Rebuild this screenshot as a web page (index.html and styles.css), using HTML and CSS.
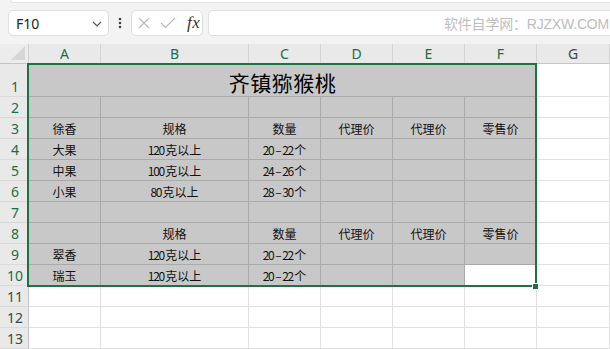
FILE: index.html
```html
<!DOCTYPE html>
<html lang="zh-CN">
<head>
<meta charset="utf-8">
<title>齐镇猕猴桃</title>
<link rel="stylesheet" href="styles.css">
</head>
<body>
<div class="toolbar">
  <div class="edge"></div>
  <div class="formula-row">
    <div class="namebox">
      <span class="ref">F10</span>
      <svg class="chev" width="10" height="6" viewBox="0 0 10 6"><polyline points="1,1 5,5 9,1" fill="none" stroke="#555" stroke-width="1.2"/></svg>
    </div>
    <div class="dots">
      <svg width="4" height="12" viewBox="0 0 4 12"><circle cx="2" cy="2" r="1.3" fill="#444"/><circle cx="2" cy="6" r="1.3" fill="#444"/><circle cx="2" cy="10" r="1.3" fill="#444"/></svg>
    </div>
    <div class="fxbox">
      <svg class="ico" width="12" height="12" viewBox="0 0 12 12"><path d="M1 1 L11 11 M11 1 L1 11" stroke="#b8b8b8" stroke-width="1.1" fill="none"/></svg>
      <svg class="ico" width="16" height="12" viewBox="0 0 16 12"><polyline points="1,6 5.5,10.5 15,1" stroke="#b8b8b8" stroke-width="1.1" fill="none"/></svg>
      <span class="fx">fx</span>
    </div>
    <div class="input"><span class="wm">软件自学网：RJZXW.COM</span></div>
  </div>
</div>

<div class="sheet">
  <div class="h corner"><svg width="14" height="14" viewBox="0 0 14 14"><polygon points="14,0 14,14 0,14" fill="#d6d6d6"/></svg></div>
  <div class="h col sel-h">A</div>
  <div class="h col sel-h">B</div>
  <div class="h col sel-h">C</div>
  <div class="h col sel-h">D</div>
  <div class="h col sel-h">E</div>
  <div class="h col sel-h">F</div>
  <div class="h col">G</div>

  <div class="h row sel-h">1</div>
  <div class="c g title">齐镇猕猴桃</div>
  <div class="c"></div>

  <div class="h row sel-h">2</div>
  <div class="c g"></div><div class="c g"></div><div class="c g"></div><div class="c g"></div><div class="c g"></div><div class="c g"></div>
  <div class="c"></div>

  <div class="h row sel-h">3</div>
  <div class="c g">徐香</div><div class="c g">规格</div><div class="c g">数量</div><div class="c g">代理价</div><div class="c g">代理价</div><div class="c g">零售价</div>
  <div class="c"></div>

  <div class="h row sel-h">4</div>
  <div class="c g">大果</div><div class="c g"><span class="n">120</span>克以上</div><div class="c g"><span class="n">20</span><span class="d">–</span><span class="n">22</span>个</div><div class="c g"></div><div class="c g"></div><div class="c g"></div>
  <div class="c"></div>

  <div class="h row sel-h">5</div>
  <div class="c g">中果</div><div class="c g"><span class="n">100</span>克以上</div><div class="c g"><span class="n">24</span><span class="d">–</span><span class="n">26</span>个</div><div class="c g"></div><div class="c g"></div><div class="c g"></div>
  <div class="c"></div>

  <div class="h row sel-h">6</div>
  <div class="c g">小果</div><div class="c g"><span class="n">80</span>克以上</div><div class="c g"><span class="n">28</span><span class="d">–</span><span class="n">30</span>个</div><div class="c g"></div><div class="c g"></div><div class="c g"></div>
  <div class="c"></div>

  <div class="h row sel-h">7</div>
  <div class="c g"></div><div class="c g"></div><div class="c g"></div><div class="c g"></div><div class="c g"></div><div class="c g"></div>
  <div class="c"></div>

  <div class="h row sel-h">8</div>
  <div class="c g"></div><div class="c g">规格</div><div class="c g">数量</div><div class="c g">代理价</div><div class="c g">代理价</div><div class="c g">零售价</div>
  <div class="c"></div>

  <div class="h row sel-h">9</div>
  <div class="c g">翠香</div><div class="c g"><span class="n">120</span>克以上</div><div class="c g"><span class="n">20</span><span class="d">–</span><span class="n">22</span>个</div><div class="c g"></div><div class="c g"></div><div class="c g"></div>
  <div class="c"></div>

  <div class="h row sel-h">10</div>
  <div class="c g">瑞玉</div><div class="c g"><span class="n">120</span>克以上</div><div class="c g"><span class="n">20</span><span class="d">–</span><span class="n">22</span>个</div><div class="c g"></div><div class="c g"></div><div class="c"></div>
  <div class="c"></div>

  <div class="h row">11</div>
  <div class="c"></div><div class="c"></div><div class="c"></div><div class="c"></div><div class="c"></div><div class="c"></div><div class="c"></div>

  <div class="h row">12</div>
  <div class="c"></div><div class="c"></div><div class="c"></div><div class="c"></div><div class="c"></div><div class="c"></div><div class="c"></div>

  <div class="h row">13</div>
  <div class="c"></div><div class="c"></div><div class="c"></div><div class="c"></div><div class="c"></div><div class="c"></div><div class="c"></div>

  <div class="selection"><div class="handle"></div></div>
</div>
</body>
</html>
```

FILE: styles.css
```css
* { box-sizing: border-box; }

html, body {
  margin: 0;
  padding: 0;
  background: #ffffff;
  overflow: hidden;
}

body {
  width: 610px;
  height: 349px;
  font-family: "Noto Sans CJK SC", "Noto Sans", sans-serif;
}

/* ---------- toolbar ---------- */
.toolbar {
  height: 44px;
  background: #f3f3f3;
  overflow: hidden;
}

.edge {
  height: 3px;
  margin-left: 10px;
  background: #ffffff;
  border-bottom: 1px solid #e4e4e4;
  border-left: 1px solid #e4e4e4;
  border-bottom-left-radius: 6px;
}

.formula-row {
  display: flex;
  align-items: center;
  height: 26px;
  margin-top: 7px;
  padding-left: 8px;
}

.namebox {
  width: 101px;
  height: 26px;
  background: #ffffff;
  border: 1px solid #dedede;
  border-radius: 5px;
  display: flex;
  align-items: center;
  justify-content: space-between;
  padding: 0 6px 0 7px;
}

.ref {
  font-family: "Noto Sans", sans-serif;
  font-size: 14px;
  color: #222;
}

.chev { margin-top: 1px; }

.dots {
  width: 22px;
  display: flex;
  justify-content: center;
  align-items: center;
}
.dots svg { display: block; }

.fxbox {
  width: 72px;
  height: 26px;
  background: #ffffff;
  border: 1px solid #dedede;
  border-radius: 5px;
  display: flex;
  align-items: center;
  padding-left: 6px;
  gap: 10px;
}
.fxbox .ico { display: block; }
.fx {
  font-family: "Liberation Serif", "DejaVu Serif", serif;
  font-style: italic;
  font-size: 17px;
  color: #333;
  margin-left: 1px;
  letter-spacing: 0.5px;
}

.input {
  flex: 1;
  height: 26px;
  margin-left: 5px;
  background: #ffffff;
  border: 1px solid #dedede;
  border-right: none;
  border-radius: 5px 0 0 5px;
  display: flex;
  align-items: center;
  justify-content: flex-end;
  padding-right: 1px;
}
.wm {
  font-family: "Liberation Sans", "Noto Sans CJK SC", sans-serif;
  font-size: 14px;
  color: #bdbdbd;
  letter-spacing: -0.2px;
}

/* ---------- sheet ---------- */
.sheet {
  position: relative;
  display: grid;
  grid-template-columns: 29px 72px 148px 72px 72px 72px 72px 1fr;
  grid-template-rows: 20px 33px repeat(12, 21px);
}

.c {
  border-right: 1px solid #e1e1e1;
  border-bottom: 1px solid #e1e1e1;
  display: flex;
  align-items: center;
  justify-content: center;
  font-size: 12px;
  color: #111;
  white-space: nowrap;
}

.c.g {
  background: #c8c8c8;
  border-right-color: #aaaaaa;
  border-bottom-color: #aaaaaa;
}

.c.title {
  grid-column: span 6;
  font-size: 21px;
  letter-spacing: 0.5px;
  padding-top: 3px;
  color: #000;
}

.n {
  letter-spacing: -1.3px;
  margin-right: 1.3px;
}

.d {
  margin: 0 0.5px;
}

.h {
  background: #e9e9e9;
  border-right: 1px solid #cfcfcf;
  border-bottom: 1px solid #cfcfcf;
  font-family: "Noto Sans", sans-serif;
  font-size: 14px;
  color: #444;
  display: flex;
  justify-content: center;
}

.h.col {
  align-items: center;
  line-height: 1;
  border-right-color: #d4d4d4;
  border-bottom-color: #c4c4c4;
  padding-top: 1px;
}

.h.row {
  align-items: flex-end;
  line-height: 1;
  padding-bottom: 2px;
  border-right-color: #c4c4c4;
  border-bottom-color: #d9d9d9;
  justify-content: center;
  padding-left: 2px;
}

.h.sel-h { color: #1b6e45; }

.h.corner {
  background: #ececec;
  align-items: flex-end;
  justify-content: flex-end;
  padding: 0 3px 3px 0;
  border-bottom-color: #c4c4c4;
}
.h.corner svg { display: block; }

/* selection overlay */
.selection {
  position: absolute;
  left: 27px;
  top: 19px;
  width: 510px;
  height: 224px;
  border: 2px solid #1e7145;
  pointer-events: none;
}

.handle {
  position: absolute;
  right: -4px;
  bottom: -5px;
  width: 7px;
  height: 7px;
  background: #1e7145;
  border: 1px solid #ffffff;
}
```
